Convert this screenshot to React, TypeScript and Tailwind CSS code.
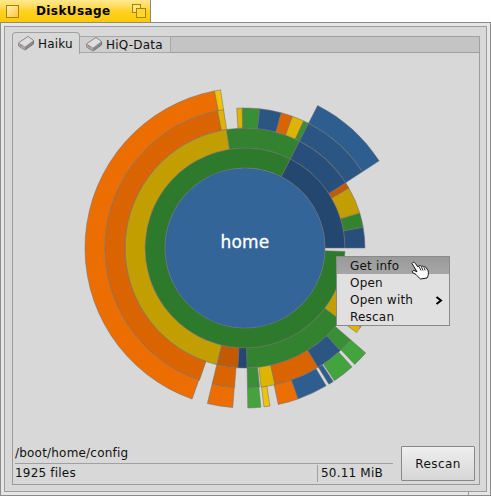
const CX = 245;
const CY = 248;

// [ring, startDeg, endDeg, colour] - degrees clockwise from east, rings are 20px wide
type Segment = [number, number, number, string];

const segments: Segment[] = [
  [0, 2, 297, "#2e7a2c"],
  [0, -63, 0, "#24476f"],

  [1, -63, -99, "#338230"],
  [1, 103.5, 261, "#c29e00"],
  [1, 93.4, 103.5, "#c45a00"],
  [1, 89, 93.4, "#24476f"],
  [1, 37, 89, "#338230"],
  [1, 15, 37, "#c29e00"],
  [1, -10, 0, "#284f7c"],
  [1, -17, -10, "#338230"],
  [1, -30, -17, "#c29e00"],
  [1, -33, -30, "#c45a00"],
  [1, -63, -33, "#284f7c"],

  [2, 109, 258.7, "#d96400"],
  [2, 258.7, 261.2, "#dfb400"],
  [2, 94.3, 103.6, "#d96400"],
  [2, 84, 89, "#398f35"],
  [2, 77.6, 83.4, "#dfb400"],
  [2, 58.5, 77.6, "#d96400"],
  [2, 47, 58.5, "#2b5683"],
  [2, 41, 47, "#398f35"],
  [2, 34.3, 37.2, "#dfb400"],
  [2, 30, 34.3, "#d96400"],
  [2, -93.4, -91.1, "#dfb400"],
  [2, -91.1, -84, "#398f35"],
  [2, -84, -75, "#2b5683"],
  [2, -75, -70.2, "#d96400"],
  [2, -70.2, -65.2, "#dfb400"],
  [2, -65.2, -63, "#398f35"],
  [2, -63, -33, "#2b5683"],

  [3, 109.3, 259, "#ec6e00"],
  [3, 259, 261.2, "#f0c400"],
  [3, 94.4, 103.6, "#ec6e00"],
  [3, 84.3, 89, "#43a33c"],
  [3, 81, 83.2, "#f0c400"],
  [3, 70.6, 78, "#ec6e00"],
  [3, 59.5, 70.6, "#2e5e90"],
  [3, 56.5, 58.4, "#2e5e90"],
  [3, 48, 56, "#43a33c"],
  [3, 41, 46.7, "#43a33c"],
  [3, -63, -33, "#2e5e90"],
];

function point(r: number, deg: number) {
  const rad = (deg * Math.PI) / 180;
  return `${(CX + r * Math.cos(rad)).toFixed(2)} ${(CY + r * Math.sin(rad)).toFixed(2)}`;
}

function arcPath(ring: number, a: number, b: number) {
  const start = Math.min(a, b);
  const end = Math.max(a, b);
  const inner = 80 + ring * 20;
  const outer = inner + 20;
  const large = end - start > 180 ? 1 : 0;
  return [
    `M ${point(inner, start)}`,
    `A ${inner} ${inner} 0 ${large} 1 ${point(inner, end)}`,
    `L ${point(outer, end)}`,
    `A ${outer} ${outer} 0 ${large} 0 ${point(outer, start)}`,
    "Z",
  ].join(" ");
}

function CloseBox() {
  return (
    <div className="h-[13px] w-[13px] border border-[#a88400] bg-gradient-to-br from-[#fff3b8] to-[#ffc400]" />
  );
}

function ZoomBox() {
  return (
    <svg width="14" height="14" viewBox="0 0 14 14">
      <rect x="0.5" y="0.5" width="8" height="8" fill="#ffe680" stroke="#a88400" />
      <rect x="4.5" y="4.5" width="9" height="9" fill="#ffd633" stroke="#a88400" />
    </svg>
  );
}

function DiskIcon() {
  return (
    <svg width="16" height="15" viewBox="0 0 16 15" className="shrink-0">
      <path d="M0.5 7 L10 0.5 L15.5 4.5 L15.5 8 L7 14 L0.5 10 Z" fill="#8a8a8a" stroke="#666" strokeWidth="0.8" />
      <path d="M0.5 7 L10 0.5 L15.5 4.5 L7 11 Z" fill="#dedede" stroke="#888" strokeWidth="0.6" />
      <path d="M0.5 7 L7 11 L7 14 L0.5 10 Z" fill="#a8a8a8" />
      <path d="M2 8.6 L4 9.8" stroke="#d8683a" strokeWidth="1" />
    </svg>
  );
}

function HandCursor() {
  return (
    <svg width="20" height="19" viewBox="0 0 20 19" className="absolute left-[74px] top-[4px]">
      <path
        d="M1 2.5 C1.5 1 3.5 1 4.2 2.3 L7 6 L7.8 4.8 C8.5 4.2 9.8 4.5 10.2 5.5 C11 4.8 12.2 5 12.7 6 C13.6 5.5 14.8 5.8 15.2 6.8 L17 9.5 C17.8 12 17.5 14.5 16 17 L9.5 18 C7.5 16.5 6.5 15 5 13.5 L1.5 11.5 C0.8 10.5 1.8 9.2 3 9.5 L6 10.8 L1 2.5 Z"
        fill="#ffffff"
        stroke="#111111"
        strokeWidth="1"
        strokeLinejoin="round"
      />
      <path d="M8 5.5 L10 9.5 M10.5 6 L12 9.5 M13 6.5 L14.2 9.5" stroke="#111111" strokeWidth="0.9" fill="none" />
    </svg>
  );
}

function App() {
  return (
    <div className="flex h-[496px] w-[491px] flex-col bg-white font-['DejaVu_Sans',sans-serif] text-[12px] leading-none tracking-[0.2px] text-[#111]">
      <div className="flex h-[22px] w-[151px] items-center border-r border-[#8a8a8a] bg-gradient-to-b from-[#ffe98f] via-[#ffd21f] to-[#ffc800] pl-[6px] pr-[4px]">
        <CloseBox />
        <span className="ml-[17px] flex-1 font-bold tracking-[0.4px] text-black">DiskUsage</span>
        <ZoomBox />
      </div>

      <div className="relative flex h-[474px] w-[491px] border border-[#8c8c8c] bg-[#e6e6e6] p-[3px]">
        <div className="flex flex-1 flex-col border border-[#9c9c9c] bg-[#d8d8d8] pb-[6px] pl-[7px] pr-[6px] pt-[5px]">
          <div className="flex h-[21px] items-end">
            <div className="z-10 -mb-px flex h-[22px] w-[68px] items-center gap-[4px] rounded-t-[4px] border border-b-0 border-[#a0a0a0] bg-[#d8d8d8] pl-[5px]">
              <DiskIcon />
              <span>Haiku</span>
            </div>
            <div className="flex h-[17px] w-[91px] items-center gap-[4px] border-y border-r border-[#a8a8a8] bg-[#cfcfcf] pl-[6px]">
              <DiskIcon />
              <span>HiQ-Data</span>
            </div>
            <div className="h-[17px] flex-1 border-y border-r border-[#a0a0a0] bg-[#c4c4c4]" />
          </div>

          <div className="relative flex flex-1 flex-col border border-t-0 border-[#9c9c9c] bg-[#d8d8d8]">
            <svg viewBox="13 53 466 391" className="h-[391px] w-[466px] shrink-0">
              {segments.map(([ring, a, b, color], i) => (
                <path key={i} d={arcPath(ring, a, b)} fill={color} stroke="#707070" strokeOpacity="0.75" strokeWidth="0.7" />
              ))}
              <circle cx={CX} cy={CY} r={80} fill="#336598" stroke="#707070" strokeOpacity="0.6" strokeWidth="0.7" />
              <text
                x={CX}
                y={243}
                textAnchor="middle"
                dominantBaseline="middle"
                fill="#ffffff"
                stroke="#ffffff"
                strokeWidth="0.3"
                fontSize="17"
                fontFamily="'DejaVu Sans', sans-serif"
              >
                home
              </text>
            </svg>

            <div className="flex flex-1 pl-[2px] pr-[4px]">
              <div className="flex flex-1 flex-col">
                <div className="flex h-[19px] items-center pb-[2px]">/boot/home/config</div>
                <div className="flex h-[19px] w-[378px] items-center border-t border-[#a0a0a0]">
                  <span className="w-[302px]">1925 files</span>
                  <span className="flex h-[17px] items-center border-l border-[#a0a0a0] pl-[3px]">50.11 MiB</span>
                </div>
              </div>
              <button className="mb-[3px] h-[35px] w-[74px] self-end rounded-[1px] border border-[#888] bg-gradient-to-b from-[#efefef] to-[#d6d6d6] text-[12px] tracking-[0.4px] text-[#111]">
                Rescan
              </button>
            </div>

            <div className="absolute left-[323px] top-[203px] w-[114px] border border-[#8a8a8a] bg-[#e0e0e0]">
              <div className="flex h-[17px] items-center bg-gradient-to-b from-[#9a9a9a] to-[#a6a6a6] pl-[13px] pt-px">Get info</div>
              <div className="flex h-[17px] items-center pl-[13px] pt-px">Open</div>
              <div className="flex h-[17px] items-center justify-between pl-[13px] pr-[6px] pt-px">
                <span>Open with</span>
                <svg width="8" height="9" viewBox="0 0 8 9">
                  <path d="M1.5 1 L6 4.5 L1.5 8" fill="none" stroke="#000" strokeWidth="2" />
                </svg>
              </div>
              <div className="flex h-[17px] items-center pl-[13px] pt-px">Rescan</div>
              <HandCursor />
            </div>
          </div>
        </div>
        <div className="absolute bottom-0 right-[21px] h-[3px] w-px bg-[#9c9c9c]" />
      </div>
    </div>
  );
}

export default App;
